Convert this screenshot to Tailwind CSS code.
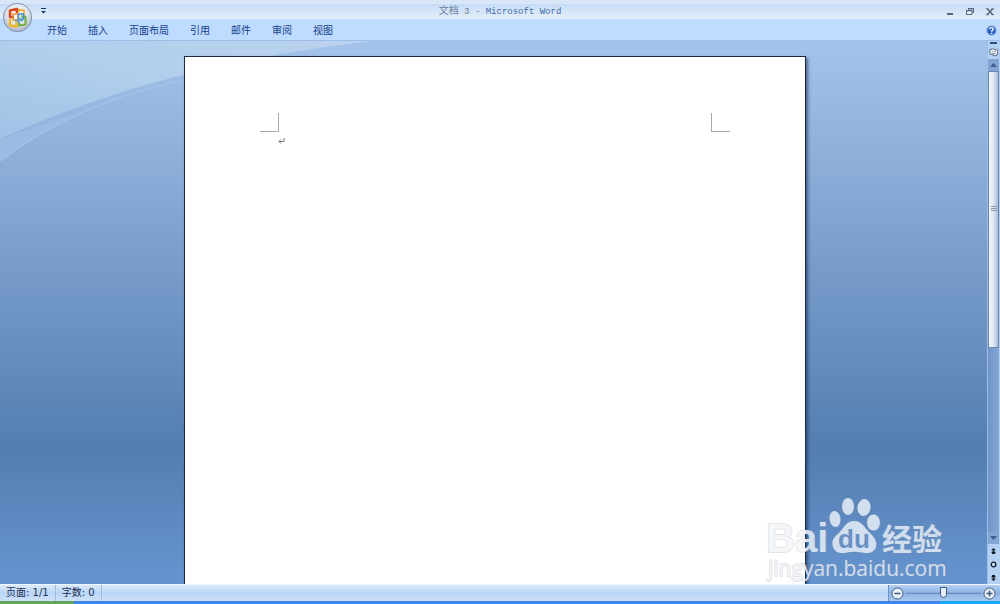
<!DOCTYPE html>
<html lang="zh-CN">
<head>
    <meta charset="UTF-8">
    <meta name="viewport" content="width=device-width, initial-scale=1.0">
    <title>文档 3 - Microsoft Word</title>
    <script src="https://cdn.jsdelivr.net/npm/@tailwindcss/browser@4"></script>
</head>
<body class="h-screen flex flex-col overflow-hidden bg-[#bfdbff] text-[#15428b] text-[10px] leading-3 font-['DejaVu_Sans','Noto_Sans_CJK_SC',sans-serif]">
    <!-- Title bar -->
    <header class="relative shrink-0">
        <div class="h-1 bg-[#d8e7f8]"></div>
        <div class="h-[15px] flex items-center bg-linear-to-b from-[#c6dcf5] to-[#e4effb]">
            <div class="flex-1">
                <button type="button" aria-label="自定义快速访问工具栏" class="block ml-10">
                    <svg width="7" height="7" viewBox="0 0 7 7" fill="#1d3a66"><path d="M1 0h5v1H1zM1 3h5L3.500 5.500z"/></svg>
                </button>
            </div>
            <h1 class="text-[#6b7f9c] whitespace-pre font-['Liberation_Mono','Noto_Sans_CJK_SC',monospace]">文档<span class="text-[9px]"> 3 - <span class="text-[#3e6aaa]">Microsoft Word</span></span></h1>
            <div class="flex-1 flex justify-end items-center gap-3 text-[#56657c]">
                <button type="button" aria-label="最小化">
                    <svg width="8" height="8" viewBox="0 0 8 8" fill="currentColor"><path d="M1 5h6v2H1z"/></svg>
                </button>
                <button type="button" aria-label="还原">
                    <svg width="8" height="8" viewBox="0 0 8 8" fill="none" stroke="currentColor"><path d="M2.500 2.500V.5h5v4H6"/><path d="M.5 2.500h5.500v4H.5z" fill="#edf4fc"/><path d="M2 .8h6M0 2.800h6.500"/></svg>
                </button>
                <button type="button" aria-label="关闭" class="mr-1.5">
                    <svg width="8" height="8" viewBox="0 0 8 8" fill="none" stroke="currentColor" stroke-width="1.500"><path d="M1.500 1l5 5.500M6.500 1l-5 5.500"/><path d="M0 .8h2.500M5.500 .8H8M0 6.700h2.500M5.500 6.700H8" stroke-width="1"/></svg>
                </button>
            </div>
        </div>
        <!-- Office button -->
        <button type="button" aria-label="Office 按钮" class="absolute z-10 left-px top-0.5">
            <svg width="32" height="32" viewBox="0 0 32 32">
                <defs>
                    <radialGradient id="orb" cx="50%" cy="38%" r="62%">
                        <stop offset="0" stop-color="#ffffff"/>
                        <stop offset=".6" stop-color="#dfe4ec"/>
                        <stop offset="1" stop-color="#a3afc2"/>
                    </radialGradient>
                </defs>
                <circle cx="16.500" cy="15.500" r="14.200" fill="url(#orb)" stroke="#8296b3"/>
                <g fill="none" stroke-linejoin="round">
                    <path d="M16 11V7l-7 1.500V15h4" stroke="#d9481f" stroke-width="2.600"/>
                    <path d="M18 10V7.500l5 1V13" stroke="#f0a21c" stroke-width="1.600"/>
                    <path d="M9 17v6.500l6.500 1V19" stroke="#efb62a" stroke-width="2.400"/>
                    <path d="M18 20v3.500l6.500-1V14.500H20" stroke="#74b043" stroke-width="2.200"/>
                    <path d="M12 12h5v6h-5z" stroke="#f0902a" stroke-width="1.400"/>
                    <path d="M17.500 12h5v5h-5z" stroke="#3d8fd0" stroke-width="1.500"/>
                    <path d="M14 18.500h8M17.500 13v9" stroke="#5aa0c8" stroke-width="1.300"/>
                </g>
            </svg>
        </button>
    </header>

    <!-- Ribbon tabs -->
    <nav class="h-[22px] shrink-0 flex items-center justify-between pt-0.5 pl-[47px] pr-[3px] border-b border-[#9bbfe8]">
        <div class="flex gap-[21px]">
            <a href="#">开始</a>
            <a href="#">插入</a>
            <a href="#">页面布局</a>
            <a href="#">引用</a>
            <a href="#">邮件</a>
            <a href="#">审阅</a>
            <a href="#">视图</a>
        </div>
        <button type="button" aria-label="帮助">
            <svg class="block" width="11" height="11" viewBox="0 0 11 11"><circle cx="5.500" cy="5.500" r="4.800" fill="#2a62c4" stroke="#a3bfe6"/><path d="M3.700 4.300c0-2.300 3.600-2.200 3.600-.2 0 1.200-1.700 1.200-1.700 2.600M5.600 7.700v1.300" fill="none" stroke="#fff" stroke-width="1.300"/></svg>
        </button>
    </nav>

    <!-- Workspace -->
    <main class="relative flex-1 min-h-0 flex bg-linear-to-b from-[#a5c3ea] via-[#547eb1] via-75% to-[#6594cf]">
        <svg class="absolute left-0 top-0" width="380" height="125" viewBox="0 0 380 125" aria-hidden="true">
            <defs>
                <linearGradient id="wave" x1="0" y1="1" x2="1" y2="0">
                    <stop offset="0" stop-color="#a2c2e6"/>
                    <stop offset=".5" stop-color="#b1ceec"/>
                    <stop offset="1" stop-color="#bbd2ef"/>
                </linearGradient>
            </defs>
            <path d="M0 120Q80 60 184 39L184 36 0 98z" fill="#9bbbe2"/>
            <path d="M0 120Q80 60 184 39" fill="none" stroke="#a9c7ea"/>
            <path d="M0 0H372Q160 24 0 98z" fill="url(#wave)"/>
        </svg>

        <div class="relative flex-1 min-w-0 flex justify-center pt-[15px] pl-[3px] overflow-hidden">
            <article class="w-full max-w-[622px] bg-white border border-b-0 border-[#1c2a40] px-[75px] pt-14 shadow-[2px_2px_3px_rgba(20,40,80,0.6)]">
                <div class="flex justify-between">
                    <div class="size-[19px] border-r border-b border-[#a8a8a8]"></div>
                    <div class="size-[19px] border-l border-b border-[#a8a8a8]"></div>
                </div>
                <p class="pl-[18px] pt-1.5">
                    <svg width="7" height="7" viewBox="0 0 7 7" fill="none" stroke="#777"><path d="M6 0v3.500H1M3 1.500l-2 2 2 2"/></svg>
                </p>
            </article>
        </div>

        <!-- Vertical scrollbar -->
        <aside class="w-[13px] shrink-0 flex flex-col pr-px bg-[#b4d0f3] border-l border-[#9dbde6]">
            <button type="button" aria-label="拆分" class="h-1 flex items-center justify-center"><span class="block w-[7px] h-0.5 bg-[#2f4f80]"></span></button>
            <button type="button" aria-label="标尺" class="h-[14px] flex items-center justify-center">
                <svg width="10" height="10" viewBox="0 0 11 10" fill="#f2f5f9" stroke="#53647e"><path d="M.5 2.500h2v-1h2l1 1h4v5h-1v1.500h-4V7.500h-3z"/><path d="M3 4.500h1M6 4.500h1.500M4 6.500h3"/></svg>
            </button>
            <button type="button" aria-label="向上滚动" class="h-3 flex items-center justify-center bg-[#82a5d4]">
                <svg width="7" height="4" viewBox="0 0 7 4" fill="#3f5f92"><path d="M0 4l3.500-4L7 4z"/></svg>
            </button>
            <div class="flex-1 bg-linear-to-r from-[#6f94c7] to-[#86a8d7]">
                <div class="h-[60%] flex items-center justify-center border border-[#6884aa] bg-linear-to-r from-[#f3f8fd] via-[#dce7f3] to-[#a9bdd7]">
                    <svg width="6" height="6" viewBox="0 0 6 6" fill="#8b97a6"><path d="M0 0h6v1H0zM0 2h6v1H0zM0 4h6v1H0z"/></svg>
                </div>
            </div>
            <button type="button" aria-label="向下滚动" class="h-3 flex items-center justify-center bg-[#82a5d4]">
                <svg width="7" height="4" viewBox="0 0 7 4" fill="#3f5f92"><path d="M0 0h7L3.500 4z"/></svg>
            </button>
            <div class="h-10 flex flex-col items-center justify-around text-[#111c2e]">
                <button type="button" aria-label="前一页"><svg class="block" width="5" height="6" viewBox="0 0 5 6" fill="currentColor"><path d="M0 2.500L2.500 0 5 2.500zM0 5L2.500 2.500 5 5zM1 5h3v1H1z"/></svg></button>
                <button type="button" aria-label="选择浏览对象"><svg class="block" width="7" height="7" viewBox="0 0 7 7" fill="#cfe0f5" stroke="currentColor" stroke-width="1.300"><circle cx="3.500" cy="3.500" r="2.300"/></svg></button>
                <button type="button" aria-label="下一页"><svg class="block" width="5" height="6" viewBox="0 0 5 6" fill="currentColor"><path d="M1 0h3v1H1zM0 1h5L2.500 3.500zM0 3.500h5L2.500 6z"/></svg></button>
            </div>
        </aside>

        <!-- Watermark -->
        <svg class="absolute right-[50px] -bottom-1.5 pointer-events-none" width="190" height="100" viewBox="0 0 190 100" fill="#dbe6f3" fill-opacity=".92" stroke="#8492a5" stroke-opacity=".3" stroke-width="1.500" paint-order="stroke">
            <defs>
                
                <linearGradient id="ink" gradientUnits="userSpaceOnUse" x1="0" y1="0" x2="190" y2="0">
                    <stop offset=".24" stop-color="#f5f6f8"/>
                    <stop offset=".24" stop-color="#dbe6f3"/>
                </linearGradient>
            </defs>
            <text x="6" y="62" font-family="Liberation Sans, sans-serif" font-weight="700" font-size="40" fill="url(#ink)">Bai</text>
            <ellipse cx="75" cy="29" rx="5.500" ry="8" transform="rotate(-8 75 29)"/>
            <ellipse cx="88" cy="16.500" rx="6" ry="8.500"/>
            <ellipse cx="104" cy="17.500" rx="6.500" ry="8.500" transform="rotate(8 104 17.500)"/>
            <ellipse cx="113.500" cy="32.500" rx="6.500" ry="8"/>
            <path d="M94 31C86 31 84 38 79 43C74 47 71 51 73 57C75 63 81 64 87 62.500C92 61.500 97 61.500 102 62.500C108 64 114 63 116 57C117.500 50 113 46 109 42C104 37 102 31 94 31z"/>
            <text x="78" y="58" font-family="Liberation Sans, sans-serif" font-weight="700" font-size="26" fill="#6a90c2" fill-opacity="1" stroke="none">du</text>
            <text x="122" y="60" font-family="Noto Sans CJK SC, sans-serif" font-weight="700" font-size="30">经验</text>
            <text x="8" y="86" font-family="Open Sans, sans-serif" font-weight="500" font-size="21" fill="url(#ink)">jingyan.baidu.com</text>
        </svg>
    </main>

    <!-- Status bar -->
    <footer class="shrink-0">
        <div class="h-[17px] flex items-stretch border-t border-[#f0f6fd] bg-linear-to-b from-[#d9e9fb] via-[#b9d5f6] to-[#cfe2fa] text-[#1b2f52]">
            <div class="flex items-center px-1.5 border-r border-[#9dbbe0]">页面: 1/1</div>
            <div class="flex items-center px-1.5 border-r border-[#9dbbe0]">字数: 0</div>
            <div class="ml-auto flex items-center gap-0.5 pl-0.5 pr-1 border-l border-[#6f94c7] bg-linear-to-b from-[#b5d0f2] via-[#8db2e3] to-[#a9c9f0]">
                <button type="button" aria-label="缩小">
                    <svg class="block" width="13" height="13" viewBox="0 0 13 13" fill="#e8f0fa" stroke="#42597c"><circle cx="6.500" cy="6.500" r="5.500"/><path d="M3.500 6.500h6" stroke-width="1.500"/></svg>
                </button>
                <input type="range" aria-label="显示比例" min="0" max="100" value="50"
                    class="w-[75px] h-3 appearance-none bg-transparent [&::-webkit-slider-runnable-track]:h-3 [&::-webkit-slider-runnable-track]:bg-linear-to-b [&::-webkit-slider-runnable-track]:from-transparent [&::-webkit-slider-runnable-track]:from-45% [&::-webkit-slider-runnable-track]:via-[#4f6f9e] [&::-webkit-slider-runnable-track]:via-50% [&::-webkit-slider-runnable-track]:to-transparent [&::-webkit-slider-runnable-track]:to-60% [&::-webkit-slider-thumb]:appearance-none [&::-webkit-slider-thumb]:w-[7px] [&::-webkit-slider-thumb]:h-[11px] [&::-webkit-slider-thumb]:rounded-b-full [&::-webkit-slider-thumb]:border [&::-webkit-slider-thumb]:border-[#42597c] [&::-webkit-slider-thumb]:bg-[#e4edf8]">
                <button type="button" aria-label="放大">
                    <svg class="block" width="13" height="13" viewBox="0 0 13 13" fill="#e8f0fa" stroke="#42597c"><circle cx="6.500" cy="6.500" r="5.500"/><path d="M3.500 6.500h6M6.500 3.500v6" stroke-width="1.500"/></svg>
                </button>
            </div>
        </div>
        <!-- Taskbar edge -->
        <div class="h-[3px] flex">
            <div class="w-[74px] bg-[#5fa55a]"></div>
            <div class="flex-1 bg-[#3f83ee]"></div>
            <div class="w-[60px] bg-[#19a9f2]"></div>
        </div>
    </footer>
</body>
</html>
